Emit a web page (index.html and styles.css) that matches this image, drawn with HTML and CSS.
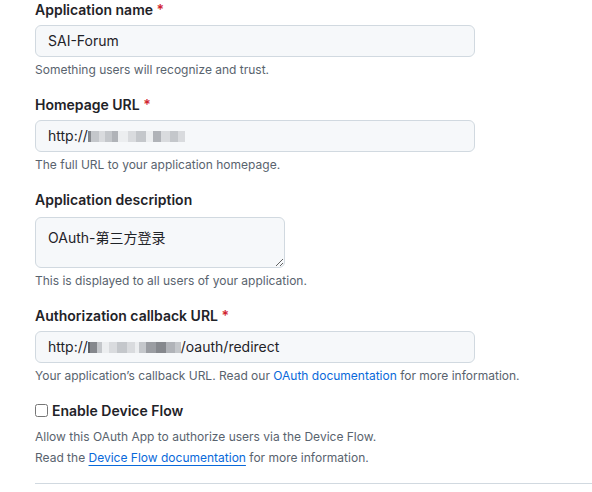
FILE: index.html
```html
<!DOCTYPE html>
<html lang="en">
<head>
<meta charset="utf-8">
<title>Register OAuth application</title>
<link rel="stylesheet" href="styles.css">
</head>
<body>
<form class="form">
  <div class="group">
    <label class="label">Application name <span class="req">*</span></label>
    <div class="input">SAI-Forum</div>
    <p class="note">Something users will recognize and trust.</p>
  </div>
  <div class="group">
    <label class="label">Homepage URL <span class="req">*</span></label>
    <div class="input">http://<span class="blur"><span class="px d2 w3"></span><span class="px g2 w8"></span><span class="px g1 w6"></span><span class="px g2 w7"></span><span class="px g3 w6"></span><span class="px g0 w10"></span><span class="px g1 w8"></span><span class="px g2 w10"></span><span class="px g0 w7"></span><span class="px g3 w8"></span><span class="px g1 w9"></span><span class="px g2 w8"></span><span class="px g1 w7"></span></span></div>
    <p class="note">The full URL to your application homepage.</p>
  </div>
  <div class="group">
    <label class="label">Application description</label>
    <textarea class="textarea">OAuth-第三方登录</textarea>
    <p class="note">This is displayed to all users of your application.</p>
  </div>
  <div class="group last">
    <label class="label">Authorization callback URL <span class="req">*</span></label>
    <div class="input">http://<span class="blur"><span class="px d3 w2"></span><span class="px d2 w7"></span><span class="px g2 w5"></span><span class="px g0 w7"></span><span class="px g1 w8"></span><span class="px g2 w10"></span><span class="px g1 w8"></span><span class="px g0 w4"></span><span class="px g2 w7"></span><span class="px d1 w10"></span><span class="px d2 w10"></span><span class="px g3 w9"></span><span class="px g2 w6"></span></span>/oauth/redirect</div>
    <p class="note">Your application’s callback URL. Read our <a class="link" href="#">OAuth documentation</a> for more information.</p>
  </div>
  <div class="group device">
    <label class="check"><input type="checkbox" class="checkbox"> Enable Device Flow</label>
    <p class="note loose">Allow this OAuth App to authorize users via the Device Flow.</p>
    <p class="note loose">Read the <a class="link underline" href="#">Device Flow documentation</a> for more information.</p>
  </div>
  <hr class="rule">
</form>
</body>
</html>
```
FILE: styles.css
```css
html, body {
  margin: 0;
  padding: 0;
  background: #ffffff;
}
body {
  font-family: Inter, "Liberation Sans", "Noto Sans CJK SC", sans-serif;
  color: #1f2328;
  font-size: 14px;
}
.form {
  padding-left: 35px;
  margin-top: 0;
}
.group {
  display: flex;
  flex-direction: column;
  align-items: flex-start;
  margin-bottom: 16px;
}
.group.last {
  margin-bottom: 15px;
}
.label {
  font-weight: 600;
  font-size: 14px;
  line-height: 20px;
  margin-bottom: 5px;
}
.req {
  color: #d1242f;
}
.input {
  box-sizing: border-box;
  width: 440px;
  height: 32px;
  padding: 0 12px;
  border: 1px solid #d1d9e0;
  border-radius: 6px;
  background: #f6f8fa;
  font-size: 14px;
  line-height: 30px;
  color: #1f2328;
  white-space: nowrap;
  display: flex;
  align-items: center;
}
.blur {
  display: inline-flex;
  height: 11px;
  align-items: stretch;
  margin-top: 1px;
}
.px { display: block; }
.w2 { width: 2px; } .w3 { width: 3px; } .w4 { width: 4px; } .w5 { width: 5px; }
.w6 { width: 6px; } .w7 { width: 7px; } .w8 { width: 8px; } .w9 { width: 9px; } .w10 { width: 10px; }
.g0 { background: #eceef0; }
.g1 { background: #d9dbde; }
.g2 { background: #c4c7cb; }
.g3 { background: #b0b3b8; }
.d1 { background: #9a9da2; }
.d2 { background: #85888d; }
.d3 { background: #5e6166; }
.textarea {
  box-sizing: border-box;
  width: 250px;
  height: 51px;
  margin: 2px 0 0;
  padding: 10px 12px 5px;
  border: 1px solid #d1d9e0;
  border-radius: 6px;
  background: #f6f8fa;
  font-family: Inter, "Liberation Sans", "Noto Sans CJK SC", sans-serif;
  font-size: 14px;
  line-height: 20px;
  color: #1f2328;
  resize: vertical;
}
.note {
  margin: 4px 0 0;
  font-size: 12px;
  line-height: 18px;
  color: #59636e;
}
.link {
  color: #0969da;
  text-decoration: none;
}
.link.underline {
  text-decoration: underline;
  text-underline-offset: 3px;
}
.device {
  margin-top: 15px;
  margin-bottom: 0;
}
.check {
  display: flex;
  align-items: center;
  gap: 4px;
  font-weight: 600;
  font-size: 14px;
  line-height: 21px;
}
.checkbox {
  margin: 0;
  width: 13px;
  height: 13px;
}
.note.loose {
  line-height: 21px;
  margin-top: 0;
}
.device .check + .note.loose {
  margin-top: 5px;
}
.rule {
  margin: 15px 0 0;
  border: 0;
  border-top: 1px solid #d1d9e0;
  height: 0;
}
```
